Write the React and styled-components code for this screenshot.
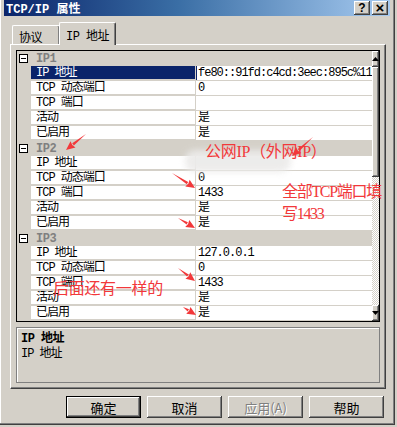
import React from 'react';
import styled, { createGlobalStyle } from 'styled-components';

const GlobalStyle = createGlobalStyle`
  html, body {
    margin: 0;
    padding: 0;
    background: #d4d0c8;
  }
  body {
    font-family: "Liberation Mono", "Noto Sans CJK SC", monospace;
    font-size: 12px;
    color: #000;
  }
`;

const raised = `
  background: #d4d0c8;
  box-shadow: inset -1px -1px 0 #404040, inset 1px 1px 0 #ffffff,
    inset -2px -2px 0 #808080, inset 2px 2px 0 #d4d0c8;
`;

const groups = [
  {
    name: 'IP1',
    rows: [
      ['IP 地址', 'fe80::91fd:c4cd:3eec:895c%11', true],
      ['TCP 动态端口', '0'],
      ['TCP 端口', ''],
      ['活动', '是'],
      ['已启用', '是'],
    ],
  },
  {
    name: 'IP2',
    rows: [
      ['IP 地址', ''],
      ['TCP 动态端口', '0'],
      ['TCP 端口', '1433'],
      ['活动', '是'],
      ['已启用', '是'],
    ],
  },
  {
    name: 'IP3',
    rows: [
      ['IP 地址', '127.0.0.1'],
      ['TCP 动态端口', '0'],
      ['TCP 端口', '1433'],
      ['活动', '是'],
      ['已启用', '是'],
    ],
  },
];

const arrows = [
  [86, 134, 66, 150],
  [313, 137, 292, 156],
  [172, 173, 195, 188],
  [178, 218, 195, 228],
  [178, 268, 195, 281],
  [183, 307, 196, 315],
];

function Arrow({ x1, y1, x2, y2 }) {
  const dx = x2 - x1;
  const dy = y2 - y1;
  const len = Math.sqrt(dx * dx + dy * dy);
  const ux = dx / len;
  const uy = dy / len;
  const head = 9;
  const bx = x2 - ux * head;
  const by = y2 - uy * head;
  const w = 4;
  const pts = [
    `${x2},${y2}`,
    `${bx - uy * w},${by + ux * w}`,
    `${bx + ux},${by + uy}`,
    `${bx + uy * w},${by - ux * w}`,
  ].join(' ');
  return (
    <g>
      <polygon
        points={`${x1},${y1} ${bx - uy * 1.3},${by + ux * 1.3} ${bx + uy * 1.3},${by - ux * 1.3}`}
        fill="#f2383a"
      />
      <polygon points={pts} fill="#f2383a" />
    </g>
  );
}

function App() {
  return (
    <>
      <GlobalStyle />
      <Window>
        <TitleBar>
          <Title>TCP/IP 属性</Title>
          <TitleButtons>
            <TitleButton>?</TitleButton>
            <TitleButton $close>×</TitleButton>
          </TitleButtons>
        </TitleBar>

        <TabStrip>
          <Tab>协议</Tab>
          <Tab $active>IP 地址</Tab>
        </TabStrip>

        <Panel>
          <ListBox>
            <Rows>
              {groups.map((g) => (
                <React.Fragment key={g.name}>
                  <GroupHeader>
                    <Toggle />
                    <GroupName>{g.name}</GroupName>
                  </GroupHeader>
                  {g.rows.map(([label, value, selected]) => (
                    <Row key={label}>
                      <Gutter />
                      <Label $selected={selected}>{label}</Label>
                      <Value $selected={selected}>{value}</Value>
                    </Row>
                  ))}
                </React.Fragment>
              ))}
            </Rows>
            <ScrollBar>
              <ScrollButton>
                <svg width="7" height="4" viewBox="0 0 7 4">
                  <polygon points="3.5,0 7,4 0,4" fill="#000" />
                </svg>
              </ScrollButton>
              <Thumb />
              <Track />
              <ScrollButton>
                <svg width="7" height="4" viewBox="0 0 7 4">
                  <polygon points="0,0 7,0 3.5,4" fill="#000" />
                </svg>
              </ScrollButton>
            </ScrollBar>
          </ListBox>

          <Description>
            <DescTitle>IP 地址</DescTitle>
            <DescText>IP 地址</DescText>
          </Description>
        </Panel>

        <ButtonRow>
          <DialogButton $default>确定</DialogButton>
          <DialogButton>取消</DialogButton>
          <DialogButton $disabled>应用(A)</DialogButton>
          <DialogButton>帮助</DialogButton>
        </ButtonRow>

        <Smudge />
        <Note style={{ left: 205, top: 141 }}>公网IP（外网IP）</Note>
        <Note $tight style={{ left: 282, top: 181 }}>
          全部TCP端口填
          <br />
          写1433
        </Note>
        <Note style={{ left: 53, top: 278 }}>后面还有一样的</Note>
        <Overlay width="397" height="427" viewBox="0 0 397 427">
          {arrows.map(([x1, y1, x2, y2], i) => (
            <Arrow key={i} x1={x1} y1={y1} x2={x2} y2={y2} />
          ))}
        </Overlay>
      </Window>
    </>
  );
}

const Window = styled.div`
  position: relative;
  width: 395px;
  height: 425px;
  box-sizing: border-box;
  padding: 0 4px 0 4px;
  border-right: 1px solid #404040;
  border-bottom: 1px solid #404040;
  box-shadow: inset -1px -1px 0 #808080, inset 1px 0 0 #ffffff;
  overflow: hidden;
`;

const TitleBar = styled.div`
  height: 16px;
  display: flex;
  align-items: center;
  justify-content: space-between;
  background: linear-gradient(90deg, #0a246a 0%, #3a6ea5 45%, #a6caf0 100%);
  padding: 0 2px 0 2px;
`;

const Title = styled.div`
  color: #fff;
  font-weight: bold;
  font-size: 12px;
`;

const TitleButtons = styled.div`
  display: flex;
  gap: 2px;
`;

const TitleButton = styled.div`
  ${raised}
  width: 16px;
  height: 14px;
  display: flex;
  align-items: center;
  justify-content: center;
  font-family: "Liberation Sans", sans-serif;
  font-weight: bold;
  font-size: ${(p) => (p.$close ? '15px' : '12px')};
  line-height: 1;
  padding-bottom: 1px;
  box-sizing: border-box;
`;

const TabStrip = styled.div`
  display: flex;
  align-items: flex-end;
  margin: 6px 0 0 8px;
  height: 22px;
  position: relative;
  z-index: 1;
`;

const Tab = styled.div`
  height: ${(p) => (p.$active ? '23px' : '19px')};
  width: ${(p) => (p.$active ? '57px' : '48px')};
  margin-left: ${(p) => (p.$active ? '-1px' : '0')};
  margin-bottom: ${(p) => (p.$active ? '-1px' : '0')};
  box-sizing: border-box;
  background: #d4d0c8;
  border-top: 1px solid #fff;
  border-left: 1px solid #fff;
  border-right: 1px solid #404040;
  box-shadow: inset -1px 0 0 #808080;
  border-radius: 2px 2px 0 0;
  padding: ${(p) => (p.$active ? '3px 0 0 6px' : '2px 0 0 6px')};
  font-size: 12px;
  letter-spacing: -0.5px;
  z-index: ${(p) => (p.$active ? 2 : 1)};
`;

const Panel = styled.div`
  margin-left: 6px;
  width: 376px;
  height: 345px;
  box-sizing: border-box;
  border-top: 1px solid #fff;
  border-left: 1px solid #fff;
  border-right: 1px solid #404040;
  border-bottom: 1px solid #404040;
  box-shadow: inset -1px -1px 0 #808080;
  padding: 5px;
  display: flex;
  flex-direction: column;
  gap: 5px;
`;

const ListBox = styled.div`
  height: 272px;
  box-sizing: border-box;
  border: 1px solid #000;
  display: flex;
  background: #d4d0c8;
`;

const Rows = styled.div`
  flex: 1;
  display: flex;
  flex-direction: column;
`;

const GroupHeader = styled.div`
  height: 15px;
  display: flex;
  align-items: center;
  background: #d4d0c8;
`;

const Toggle = styled.div`
  width: 9px;
  height: 9px;
  margin-left: 2px;
  box-sizing: border-box;
  border: 1px solid #000;
  background: #fff;
  position: relative;
  &::after {
    content: '';
    position: absolute;
    left: 1px;
    right: 1px;
    top: 3px;
    height: 1px;
    background: #000;
  }
`;

const GroupName = styled.div`
  margin-left: 8px;
  font-weight: bold;
  color: #808080;
  letter-spacing: -0.5px;
`;

const Row = styled.div`
  height: 15px;
  display: flex;
`;

const Gutter = styled.div`
  width: 14px;
  background: #d4d0c8;
`;

const Cell = styled.div`
  height: 14px;
  line-height: 14px;
  border-bottom: 1px solid #d4d0c8;
  white-space: nowrap;
  overflow: hidden;
  letter-spacing: -1px;
`;

const Label = styled(Cell)`
  width: 165px;
  padding-left: 5px;
  box-sizing: border-box;
  border-right: 1px solid #d4d0c8;
  background: ${(p) => (p.$selected ? '#0a246a' : '#fff')};
  color: ${(p) => (p.$selected ? '#fff' : '#000')};
`;

const Value = styled(Cell)`
  flex: 1;
  padding-left: 2px;
  background: #fff;
  box-shadow: ${(p) => (p.$selected ? 'inset 1px 0 0 #0a246a' : 'none')};
`;

const ScrollBar = styled.div`
  width: 16px;
  display: flex;
  flex-direction: column;
`;

const ScrollButton = styled.div`
  ${raised}
  height: 16px;
  display: flex;
  align-items: center;
  justify-content: center;
`;

const Thumb = styled.div`
  ${raised}
  height: 110px;
`;

const Track = styled.div`
  flex: 1;
  background-color: #fff;
  background-image: repeating-conic-gradient(#d4d0c8 0 25%, #fff 0 50%);
  background-size: 2px 2px;
`;

const Description = styled.div`
  height: 56px;
  box-sizing: border-box;
  border: 1px solid #808080;
  box-shadow: inset 1px 1px 0 #fff;
  padding: 4px 4px;
`;

const DescTitle = styled.div`
  font-weight: bold;
  line-height: 14px;
  letter-spacing: -0.5px;
`;

const DescText = styled.div`
  line-height: 14px;
  margin-top: 1px;
  letter-spacing: -1px;
`;

const ButtonRow = styled.div`
  display: flex;
  justify-content: flex-end;
  gap: 6px;
  margin-top: 7px;
  padding-right: 6px;
`;

const DialogButton = styled.div`
  ${raised}
  width: 75px;
  height: 22px;
  box-sizing: border-box;
  display: flex;
  align-items: center;
  justify-content: center;
  font-family: "Noto Sans CJK SC", sans-serif;
  font-size: 13px;
  color: ${(p) => (p.$disabled ? '#808080' : '#000')};
  text-shadow: ${(p) => (p.$disabled ? '1px 1px 0 #fff' : 'none')};
  border: ${(p) => (p.$default ? '1px solid #000' : 'none')};
`;

const Note = styled.div`
  position: absolute;
  font-family: "Liberation Serif", "Noto Sans CJK SC", serif;
  font-size: 16px;
  line-height: 22px;
  color: #f2383a;
  white-space: nowrap;
  letter-spacing: ${(p) => (p.$tight ? '-1.3px' : '-0.3px')};
  pointer-events: none;
`;

const Smudge = styled.div`
  position: absolute;
  left: 185px;
  top: 150px;
  width: 106px;
  height: 22px;
  background: #ecebea;
  border-radius: 10px;
  filter: blur(3px);
  opacity: 0.95;
`;

const Overlay = styled.svg`
  position: absolute;
  left: 0;
  top: 0;
  pointer-events: none;
`;

export default App;
